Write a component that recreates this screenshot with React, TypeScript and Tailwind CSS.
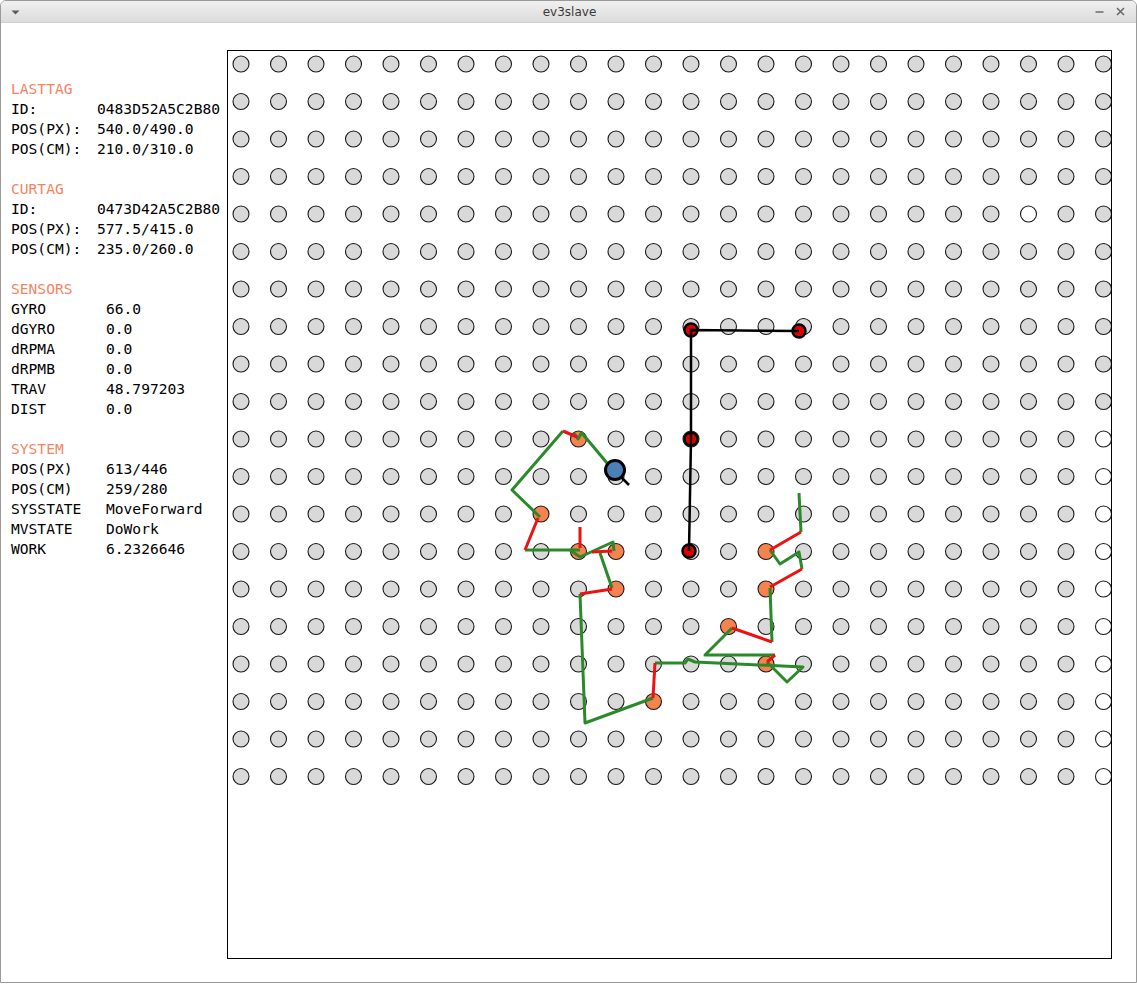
import React from "react";

const COLS = 24;
const ROWS = 20;
const STEP = 37.5;

const orange = new Set(["9,10", "8,12", "9,13", "10,13", "10,14", "14,13", "14,14", "13,15", "14,16", "11,17"]);

const isWhite = (i: number, j: number) => (i === 21 && j === 4) || (i === 23 && j >= 10);

type Pt = [number, number];

const greenLines: Pt[][] = [
  [[607, 463], [581, 432]],
  [[574, 433], [578, 439], [582, 432]],
  [[563, 431], [512, 490], [540, 517]],
  [[525, 550], [580, 550]],
  [[570, 550], [580, 557], [613, 542], [614, 551]],
  [[600, 553], [612, 588]],
  [[580, 594], [585, 723], [653, 698]],
  [[655, 663], [685, 663], [688, 659], [695, 662], [803, 667], [787, 682], [767, 662]],
  [[775, 655], [705, 655], [732, 628]],
  [[772, 642], [770, 588]],
  [[802, 569], [799, 552], [780, 564], [770, 550]],
  [[801, 532], [799, 493]],
];

const redLines: Pt[][] = [
  [[563, 431], [577, 437]],
  [[538, 518], [525, 550]],
  [[580, 527], [580, 548]],
  [[592, 552], [612, 551]],
  [[612, 589], [580, 594]],
  [[653, 698], [655, 663]],
  [[732, 628], [772, 642]],
  [[770, 587], [802, 569]],
  [[770, 550], [801, 532]],
  [[775, 655], [767, 662]],
];

const blackPath: Pt[] = [[799, 331], [691, 330], [691, 439], [689, 551]];

const pts = (p: Pt[]) => p.map(([x, y]) => `${x},${y}`).join(" ");

const sections = [
  {
    title: "LASTTAG",
    w: "w-[86px]",
    rows: [["ID:", "0483D52A5C2B80"], ["POS(PX):", "540.0/490.0"], ["POS(CM):", "210.0/310.0"]],
  },
  {
    title: "CURTAG",
    w: "w-[86px]",
    rows: [["ID:", "0473D42A5C2B80"], ["POS(PX):", "577.5/415.0"], ["POS(CM):", "235.0/260.0"]],
  },
  {
    title: "SENSORS",
    w: "w-[95px]",
    rows: [["GYRO", "66.0"], ["dGYRO", "0.0"], ["dRPMA", "0.0"], ["dRPMB", "0.0"], ["TRAV", "48.797203"], ["DIST", "0.0"]],
  },
  {
    title: "SYSTEM",
    w: "w-[95px]",
    rows: [["POS(PX)", "613/446"], ["POS(CM)", "259/280"], ["SYSSTATE", "MoveForward"], ["MVSTATE", "DoWork"], ["WORK", "6.2326646"]],
  },
];

const Board = () => {
  const circles = [];
  for (let j = 0; j < ROWS; j++) {
    for (let i = 0; i < COLS; i++) {
      const key = `${i},${j}`;
      const fill = orange.has(key) ? "#f4834f" : isWhite(i, j) ? "#ffffff" : "#d9d9d9";
      circles.push(
        <circle key={key} cx={241 + i * STEP} cy={64 + j * STEP} r={8} fill={fill} stroke="#1a1a1a" strokeWidth={1.1} />
      );
    }
  }
  return (
    <svg viewBox="228 51 883 907" width={883} height={907} className="block">
      {circles}
      {greenLines.map((l, k) => (
        <polyline key={"g" + k} points={pts(l)} fill="none" stroke="#2a8a2a" strokeWidth={3} strokeLinejoin="round" />
      ))}
      {redLines.map((l, k) => (
        <polyline key={"r" + k} points={pts(l)} fill="none" stroke="#ee1111" strokeWidth={3} strokeLinejoin="round" />
      ))}
      {blackPath.map(([x, y], k) => (
        <circle key={"b" + k} cx={x} cy={y} r={6.5} fill="#e00000" stroke="#000" strokeWidth={2.5} />
      ))}
      <polyline points={pts(blackPath)} fill="none" stroke="#000" strokeWidth={2.5} />
      <line x1={621} y1={477} x2={629} y2={485} stroke="#000" strokeWidth={2.5} />
      <circle cx={615} cy={470} r={9.5} fill="#4a7fb8" stroke="#000" strokeWidth={3} />
    </svg>
  );
};

export default function App() {
  return (
    <div className="w-[1137px] h-[984px] bg-white">
      <div className="w-[1137px] h-[983px] flex flex-col border border-[#9a9a9a] rounded-t-[6px] overflow-hidden">
        <div className="h-[22px] shrink-0 flex items-center justify-between px-[9px] bg-gradient-to-b from-[#f0f0f0] to-[#dcdcdc] border-b border-[#d0d0d0]">
          <svg width="11" height="8" viewBox="0 0 11 8">
            <path d="M1.5 2.5 L9.5 2.5 L5.5 6.5 Z" fill="#5a5a5a" />
          </svg>
          <span className="text-[12px] text-[#3a3a3a] pl-[24px]" style={{ fontFamily: '"DejaVu Sans", sans-serif' }}>
            ev3slave
          </span>
          <div className="flex items-center gap-[10px] pr-[1px]">
            <svg width="11" height="11" viewBox="0 0 11 11">
              <path d="M1.5 6 H9.5" stroke="#6a6a6a" strokeWidth="1.6" />
            </svg>
            <svg width="11" height="11" viewBox="0 0 11 11">
              <path d="M2 2 L9 9 M9 2 L2 9" stroke="#6a6a6a" strokeWidth="1.6" />
            </svg>
          </div>
        </div>
        <div className="flex flex-row flex-1">
          <div
            className="w-[226px] shrink-0 pt-[56px] pl-[10px] text-[14.6px] leading-[20px] text-black"
            style={{ fontFamily: '"DejaVu Sans Mono", monospace' }}
          >
            {sections.map((s) => (
              <div key={s.title} className="mb-[20px]">
                <div className="text-[#f4845f]">{s.title}</div>
                {s.rows.map(([a, b]) => (
                  <div key={a} className="flex whitespace-pre">
                    <span className={s.w + " shrink-0"}>{a}</span>
                    <span>{b}</span>
                  </div>
                ))}
              </div>
            ))}
          </div>
          <div className="mt-[27px] w-[885px] h-[909px] border border-black overflow-hidden">
            <Board />
          </div>
        </div>
      </div>
    </div>
  );
}
